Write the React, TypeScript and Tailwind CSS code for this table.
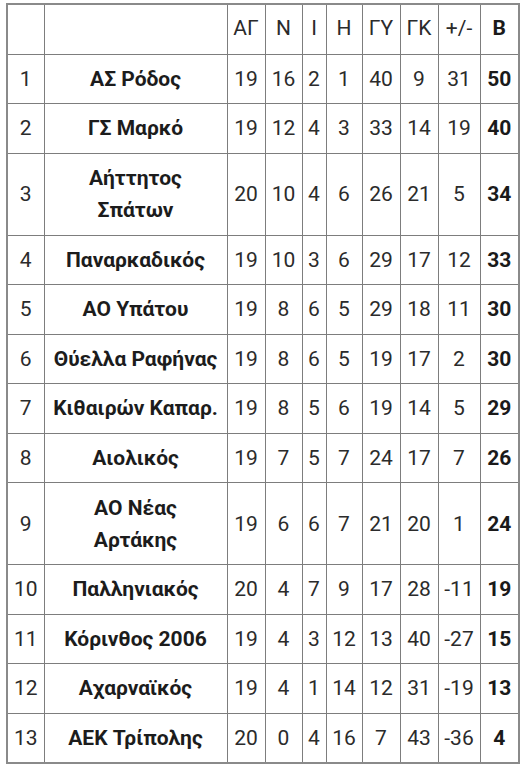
const rows: [number, string, number, number, number, number, number, number, string, number][] = [
  [1, "ΑΣ Ρόδος", 19, 16, 2, 1, 40, 9, "31", 50],
  [2, "ΓΣ Μαρκό", 19, 12, 4, 3, 33, 14, "19", 40],
  [3, "Αήττητος\nΣπάτων", 20, 10, 4, 6, 26, 21, "5", 34],
  [4, "Παναρκαδικός", 19, 10, 3, 6, 29, 17, "12", 33],
  [5, "ΑΟ Υπάτου", 19, 8, 6, 5, 29, 18, "11", 30],
  [6, "Θύελλα Ραφήνας", 19, 8, 6, 5, 19, 17, "2", 30],
  [7, "Κιθαιρών Καπαρ.", 19, 8, 5, 6, 19, 14, "5", 29],
  [8, "Αιολικός", 19, 7, 5, 7, 24, 17, "7", 26],
  [9, "ΑΟ Νέας\nΑρτάκης", 19, 6, 6, 7, 21, 20, "1", 24],
  [10, "Παλληνιακός", 20, 4, 7, 9, 17, 28, "-11", 19],
  [11, "Κόρινθος 2006", 19, 4, 3, 12, 13, 40, "-27", 15],
  [12, "Αχαρναϊκός", 19, 4, 1, 14, 12, 31, "-19", 13],
  [13, "ΑΕΚ Τρίπολης", 20, 0, 4, 16, 7, 43, "-36", 4],
];

const cell = "border border-[#7d7d7d] text-center align-middle p-0";

export default function App() {
  return (
    <div
      className="w-[523px] h-[768px] bg-white overflow-hidden"
      style={{ fontFamily: "Roboto, 'Noto Sans', 'Liberation Sans', sans-serif" }}
    >
      <div className="pt-[3px] pl-[6px]">
        <table className="table-fixed border-collapse border-2 border-[#8a8a8a] w-[512px] text-[21px] leading-[32px] text-[#2b2b2b]">
          <colgroup>
            <col className="w-[37px]" />
            <col className="w-[183px]" />
            <col className="w-[38px]" />
            <col className="w-[37px]" />
            <col className="w-[24px]" />
            <col className="w-[36px]" />
            <col className="w-[38px]" />
            <col className="w-[38px]" />
            <col className="w-[42px]" />
            <col className="w-[39px]" />
          </colgroup>
          <thead>
            <tr className="h-[50px]">
              <th className={cell}></th>
              <th className={cell}></th>
              {["ΑΓ", "Ν", "Ι", "Η", "ΓΥ", "ΓΚ", "+/-"].map((h) => (
                <th key={h} className={`${cell} font-normal pb-[3px]`}>
                  {h}
                </th>
              ))}
              <th className={`${cell} font-bold text-[#1a1a1a] pb-[3px]`}>Β</th>
            </tr>
          </thead>
          <tbody>
            {rows.map((r) => (
              <tr key={r[0]} className={r[1].includes("\n") ? "h-[82px]" : "h-[49.5px]"}>
                <td className={cell}>{r[0]}</td>
                <td className={`${cell} font-bold text-[#1c1c1c] px-[6px] whitespace-pre-line`}>{r[1]}</td>
                <td className={cell}>{r[2]}</td>
                <td className={cell}>{r[3]}</td>
                <td className={cell}>{r[4]}</td>
                <td className={cell}>{r[5]}</td>
                <td className={cell}>{r[6]}</td>
                <td className={cell}>{r[7]}</td>
                <td className={cell}>{r[8]}</td>
                <td className={`${cell} font-bold text-[#1a1a1a]`}>{r[9]}</td>
              </tr>
            ))}
          </tbody>
        </table>
      </div>
    </div>
  );
}
